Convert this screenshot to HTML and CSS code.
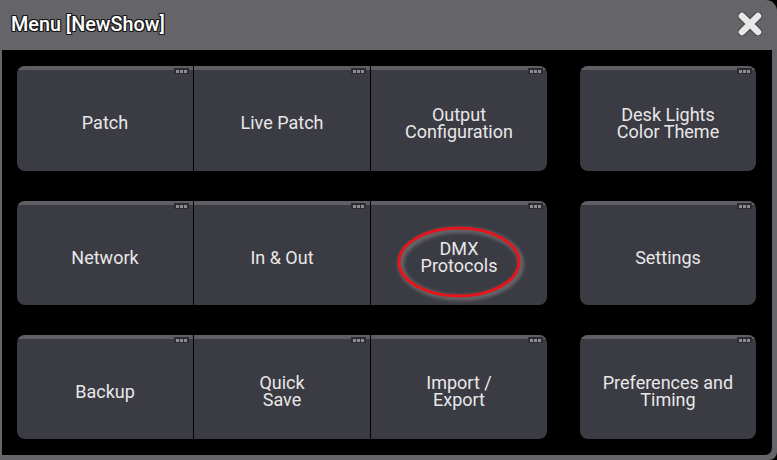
FILE: index.html
```html
<!DOCTYPE html>
<html>
<head>
<meta charset="utf-8">
<link rel="stylesheet" href="styles.css">
</head>
<body>
<div class="window">
  <div class="titlebar">
    <span class="title">Menu [NewShow]</span>
    <svg class="close" width="24" height="24" viewBox="0 0 24 24">
      <path d="M4 4 L20 20 M20 4 L4 20" stroke="#1e1e22" stroke-width="9" stroke-linecap="round" opacity="0.35"/>
      <path d="M4 4 L20 20 M20 4 L4 20" stroke="#e8e8e8" stroke-width="6.5" stroke-linecap="round"/>
    </svg>
  </div>
  <div class="content">
    <div class="grid">
      <div class="group">
        <div class="btn"><span class="dots"><i></i><i></i><i></i></span><span class="label">Patch</span></div>
        <div class="btn"><span class="dots"><i></i><i></i><i></i></span><span class="label">Live Patch</span></div>
        <div class="btn"><span class="dots"><i></i><i></i><i></i></span><span class="label">Output<br>Configuration</span></div>
      </div>
      <div class="group">
        <div class="btn"><span class="dots"><i></i><i></i><i></i></span><span class="label">Desk Lights<br>Color Theme</span></div>
      </div>
      <div class="group">
        <div class="btn"><span class="dots"><i></i><i></i><i></i></span><span class="label">Network</span></div>
        <div class="btn"><span class="dots"><i></i><i></i><i></i></span><span class="label">In &amp; Out</span></div>
        <div class="btn highlight"><span class="dots"><i></i><i></i><i></i></span><span class="label">DMX<br>Protocols</span>
          <svg class="ring" width="140" height="84" viewBox="0 0 140 84">
            <defs>
              <filter id="blur" x="-20%" y="-20%" width="140%" height="140%"><feGaussianBlur stdDeviation="2"/></filter>
            </defs>
            <ellipse cx="71" cy="43" rx="60" ry="34" fill="none" stroke="#8a8a8a" stroke-width="4" filter="url(#blur)" opacity="0.8"/>
            <ellipse cx="69" cy="41" rx="60" ry="34" fill="none" stroke="#e8141c" stroke-width="3"/>
          </svg>
        </div>
      </div>
      <div class="group">
        <div class="btn"><span class="dots"><i></i><i></i><i></i></span><span class="label">Settings</span></div>
      </div>
      <div class="group">
        <div class="btn"><span class="dots"><i></i><i></i><i></i></span><span class="label">Backup</span></div>
        <div class="btn"><span class="dots"><i></i><i></i><i></i></span><span class="label">Quick<br>Save</span></div>
        <div class="btn"><span class="dots"><i></i><i></i><i></i></span><span class="label">Import /<br>Export</span></div>
      </div>
      <div class="group">
        <div class="btn"><span class="dots"><i></i><i></i><i></i></span><span class="label">Preferences and<br>Timing</span></div>
      </div>
    </div>
  </div>
</div>
</body>
</html>
```
FILE: styles.css
```css
html, body {
  margin: 0;
  padding: 0;
  background: #000;
}
.window {
  width: 777px;
  height: 460px;
  background: #646469;
  border-top-right-radius: 11px;
  border-bottom-right-radius: 8px;
  display: flex;
  flex-direction: column;
  box-sizing: border-box;
  padding: 0 5px 5px 2px;
  overflow: hidden;
}
.titlebar {
  height: 50px;
  box-sizing: border-box;
  flex: none;
  display: flex;
  align-items: center;
  justify-content: space-between;
  padding: 0 9px 2px 9px;
}
.title {
  font-family: Roboto, "Liberation Sans", sans-serif;
  font-weight: 500;
  font-size: 19.8px;
  color: #ffffff;
  text-shadow: 1px 0 0 #1a1a1a, -1px 0 0 #1a1a1a, 0 1px 0 #1a1a1a, 0 -1px 0 #1a1a1a,
    1px 1px 0 #1a1a1a, -1px -1px 0 #1a1a1a, 1px -1px 0 #1a1a1a, -1px 1px 0 #1a1a1a;
}
.close {
  display: block;
  margin-right: 1px;
}
.content {
  flex: 1;
  background: #000;
  border-bottom-right-radius: 7px;
  padding: 16px 16px 0 15px;
}
.grid {
  display: grid;
  grid-template-columns: 530px 176px;
  grid-template-rows: 105px 104px 104px;
  column-gap: 33px;
  row-gap: 30px;
}
.group {
  display: flex;
  gap: 1px;
  border-radius: 8px;
  overflow: hidden;
}
.btn {
  flex: 1;
  position: relative;
  background: #3b3b43;
  border-top: 4px solid #5e5e64;
  display: flex;
  align-items: center;
  justify-content: center;
  padding-top: 4px;
}
.label {
  font-family: Roboto, "Liberation Sans", sans-serif;
  font-size: 18px;
  line-height: 17px;
  color: #e8e8e8;
  text-align: center;
}
.dots {
  position: absolute;
  top: -2px;
  right: 4px;
  width: 15px;
  height: 6px;
  background: #2c2c32;
  display: flex;
  align-items: center;
  justify-content: center;
  gap: 1px;
  padding: 0 1px;
  box-sizing: border-box;
}
.dots i {
  display: block;
  width: 3px;
  height: 3px;
  background: #8c8c92;
}
.ring {
  position: absolute;
  left: 19px;
  top: 16px;
}
```
